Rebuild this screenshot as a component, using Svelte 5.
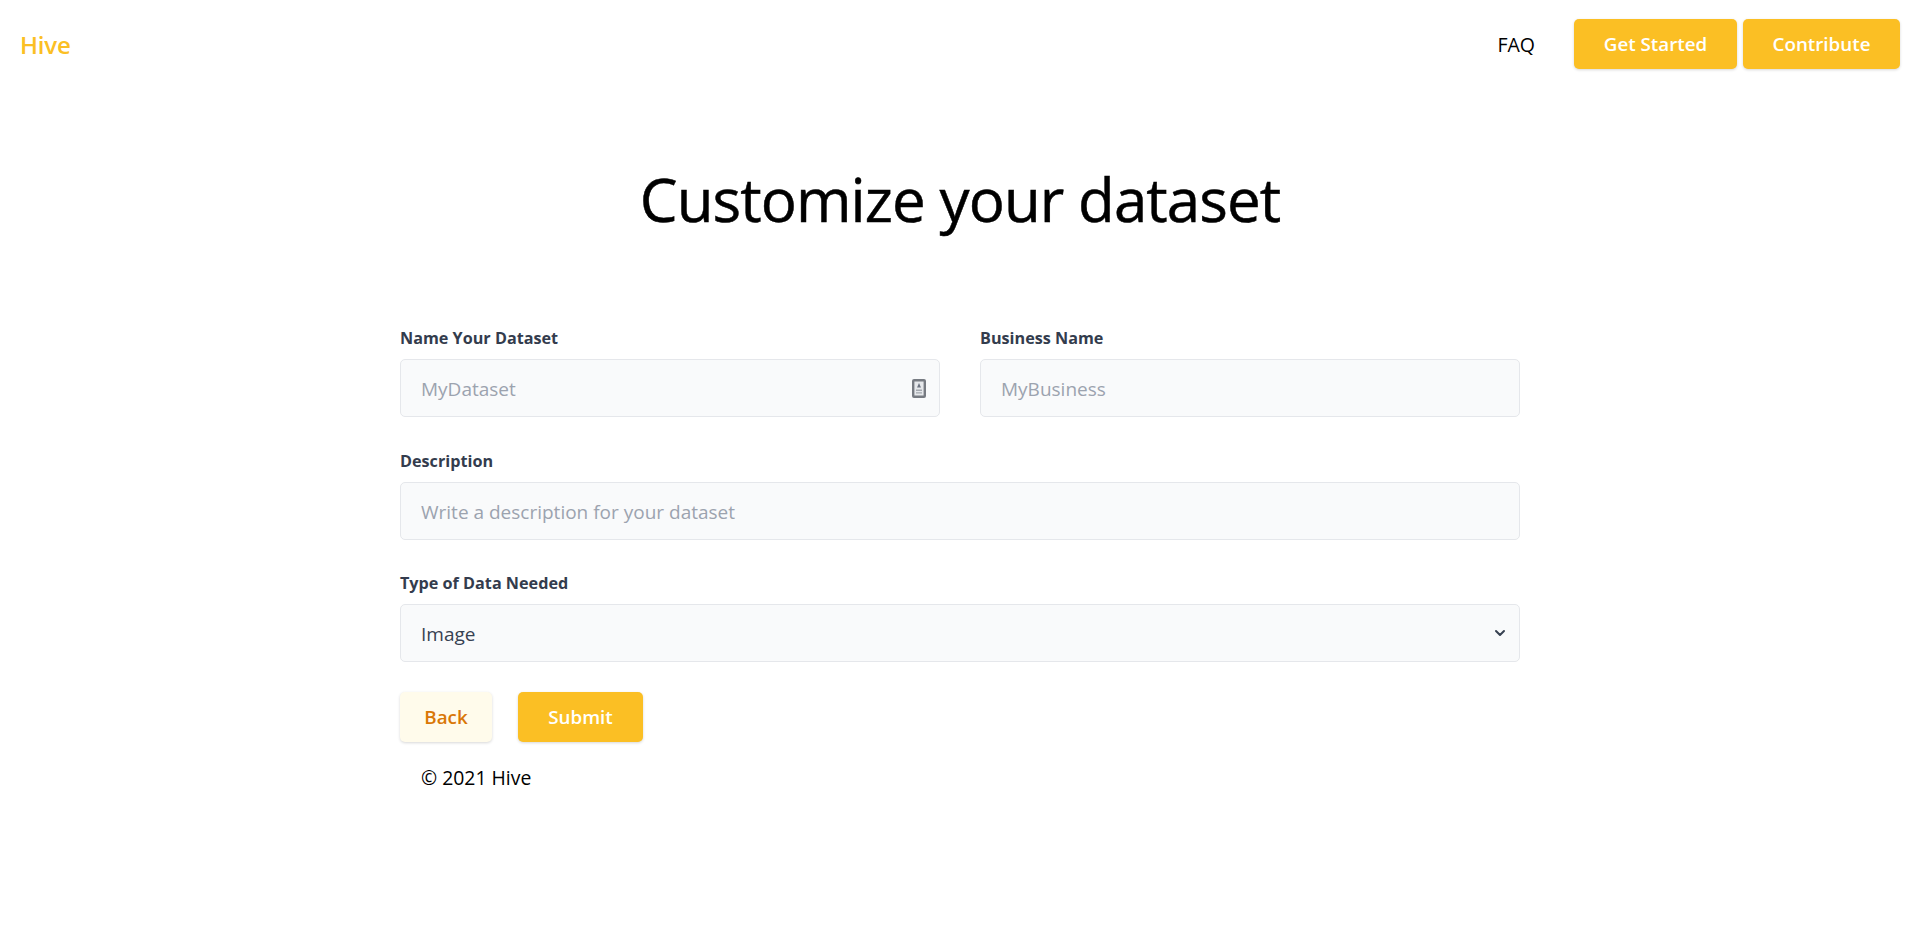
<script lang="ts">
  let name = $state('')
  let business = $state('')
  let description = $state('')
  let dataType = $state('Image')
</script>

<div class="page">
  <nav class="nav">
    <a class="nav__brand" href="#home">Hive</a>
    <div class="nav__links">
      <a class="nav__faq" href="#faq">FAQ</a>
      <button type="button" class="btn btn--primary nav__btn nav__btn--start">Get Started</button>
      <button type="button" class="btn btn--primary nav__btn nav__btn--contribute">Contribute</button>
    </div>
  </nav>

  <main class="main">
    <h1 class="title">Customize your dataset</h1>

    <form class="form" onsubmit={(e) => e.preventDefault()}>
      <div class="row">
        <label class="field">
          <span class="field__label">Name Your Dataset</span>
          <span class="field__wrap">
            <input class="field__input" placeholder="MyDataset" bind:value={name} />
            <svg class="field__icon" viewBox="0 0 14 19" aria-hidden="true">
              <rect x="1.2" y="1.2" width="11.6" height="16.6" rx="0.8" fill="#e6e8eb" stroke="#777b82" stroke-width="2.4" />
              <path d="M7 4l2 4.6H5z" fill="#6b7280" />
              <path d="M4 10.4h6v1.6H4zM4 13.2h6v1.4H4z" fill="#a3a7ae" />
            </svg>
          </span>
        </label>
        <label class="field">
          <span class="field__label">Business Name</span>
          <input class="field__input" placeholder="MyBusiness" bind:value={business} />
        </label>
      </div>

      <label class="field">
        <span class="field__label">Description</span>
        <input class="field__input" placeholder="Write a description for your dataset" bind:value={description} />
      </label>

      <label class="field">
        <span class="field__label">Type of Data Needed</span>
        <span class="field__wrap">
          <select class="field__input field__select" bind:value={dataType}>
            <option>Image</option>
            <option>Video</option>
            <option>Audio</option>
            <option>Text</option>
          </select>
          <svg class="field__chevron" viewBox="0 0 20 20" aria-hidden="true">
            <path d="M6 8l4 4 4-4" fill="none" stroke="#374151" stroke-width="2" stroke-linecap="round" stroke-linejoin="round" />
          </svg>
        </span>
      </label>

      <div class="actions">
        <button type="button" class="btn btn--light">Back</button>
        <button type="submit" class="btn btn--primary btn--submit">Submit</button>
      </div>
    </form>

    <footer class="footer">© 2021 Hive</footer>
  </main>
</div>

<style>
  :global(body) {
    margin: 0;
    background: #fff;
    font-family: "Open Sans", "Noto Sans", sans-serif;
  }
  .page {
    min-height: 937px;
  }
  .nav {
    display: flex;
    align-items: center;
    justify-content: space-between;
    padding: 19px 20px 0;
    height: 50px;
  }
  .nav__brand {
    color: #fbbf24;
    font-size: 24px;
    font-weight: 600;
    letter-spacing: -0.2px;
    text-decoration: none;
  }
  .nav__links {
    display: flex;
    align-items: center;
  }
  .nav__faq {
    color: #000;
    font-size: 19.5px;
    text-decoration: none;
    margin-right: 39px;
  }
  .btn {
    border: 0;
    border-radius: 5px;
    font-family: inherit;
    font-size: 18.8px;
    font-weight: 600;
    height: 50px;
    cursor: pointer;
    box-shadow: 0 1px 3px rgba(0, 0, 0, 0.16);
    padding: 0;
  }
  .btn--primary {
    background: #fbbf24;
    color: #fff;
  }
  .btn--light {
    background: #fffbeb;
    color: #d97706;
    width: 92px;
  }
  .btn--submit {
    width: 125px;
  }
  .nav__btn--start {
    width: 163px;
    margin-right: 6px;
  }
  .nav__btn--contribute {
    width: 157px;
  }
  .main {
    width: 1120px;
    margin: 0 auto;
  }
  .title {
    margin: 88px 0 0;
    font-size: 60px;
    line-height: 84px;
    font-weight: 500;
    letter-spacing: -0.9px;
    -webkit-text-stroke: 0.5px #000;
    color: #000;
    text-align: center;
  }
  .form {
    margin-top: 85px;
    display: flex;
    flex-direction: column;
    gap: 31px;
  }
  .row {
    display: grid;
    grid-template-columns: 1fr 1fr;
    gap: 40px;
    margin-bottom: 1px;
  }
  .field {
    display: block;
  }
  .field__label {
    display: block;
    font-size: 16.2px;
    line-height: 24px;
    font-weight: 700;
    color: #333c4d;
    margin-bottom: 9px;
  }
  .field__wrap {
    display: block;
    position: relative;
  }
  .field__input {
    display: block;
    box-sizing: border-box;
    width: 100%;
    height: 58px;
    padding: 2px 20px 0;
    border: 1px solid #e5e7eb;
    border-radius: 5px;
    background: #f9fafb;
    color: #374151;
    font-family: inherit;
    font-size: 19px;
    outline: none;
  }
  .field__input::placeholder {
    color: #9ca3af;
    opacity: 1;
  }
  .field__select {
    appearance: none;
    -webkit-appearance: none;
  }
  .field__icon {
    position: absolute;
    right: 14px;
    top: 20px;
    width: 14px;
    height: 19px;
  }
  .field__chevron {
    position: absolute;
    right: 10px;
    top: 19px;
    width: 20px;
    height: 20px;
    pointer-events: none;
  }
  .actions {
    display: flex;
    gap: 26px;
    margin-top: -1px;
  }
  .footer {
    margin-top: 22px;
    padding-left: 21px;
    color: #000;
    font-size: 19.4px;
    line-height: 28px;
  }
</style>
